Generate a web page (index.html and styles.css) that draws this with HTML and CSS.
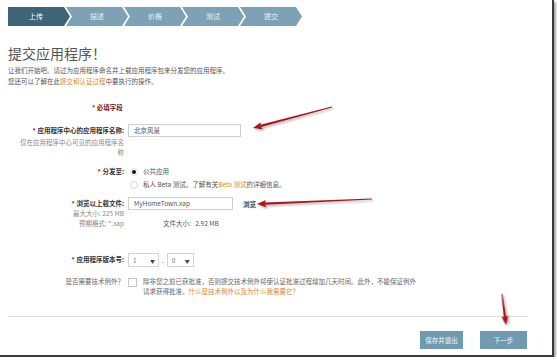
FILE: index.html
```html
<!DOCTYPE html>
<html lang="zh-CN">
<head>
    <meta charset="UTF-8">
    <meta name="viewport" content="width=device-width, initial-scale=1.0">
    <title>提交应用程序</title>
    <link rel="stylesheet" href="styles.css">
</head>
<body>
<div class="frame">

    <!-- wizard steps -->
    <ol class="steps">
        <li class="step current">上传</li>
        <li class="step">描述</li>
        <li class="step">价格</li>
        <li class="step">测试</li>
        <li class="step">提交</li>
    </ol>

    <h1>提交应用程序！</h1>
    <p class="intro">
        让我们开始吧。请过为应用程序命名并上载应用程序包来分发您的应用程序。<br>
        您还可以了解在此<a href="#">提交和认证过程</a>中要执行的操作。
    </p>

    <p class="required"><span class="star">*</span> 必填字段</p>

    <div class="form">
        <div class="row row-name">
            <div class="label">
                <div class="label-main"><span class="star">*</span> 应用程序中心的应用程序名称:</div>
                <div class="hint narrow">仅在应用程序中心可见的应用程序名称</div>
            </div>
            <div class="field">
                <div class="input wide">北京风景</div>
            </div>
        </div>

        <div class="row row-dist">
            <div class="label">
                <div class="label-main"><span class="star">*</span> 分发至:</div>
            </div>
            <div class="field">
                <div class="option"><span class="radio checked"></span>公共应用</div>
                <div class="option"><span class="radio"></span>私人 Beta 测试。了解有关 <a href="#">Beta 测试</a>的详细信息。</div>
            </div>
        </div>

        <div class="row row-file">
            <div class="label">
                <div class="label-main"><span class="star">*</span> 浏览以上载文件:</div>
                <div class="hint tight">最大大小: 225 MB</div>
                <div class="hint">预期格式: *.xap</div>
            </div>
            <div class="field">
                <div class="file-line">
                    <div class="input file">MyHomeTown.xap</div>
                    <a class="browse" href="#">浏览</a>
                </div>
                <div class="filesize">文件大小:&nbsp;&nbsp; 2.92 MB</div>
            </div>
        </div>

        <div class="row row-version">
            <div class="label">
                <div class="label-main"><span class="star">*</span> 应用程序版本号:</div>
            </div>
            <div class="field version">
                <div class="select"><span>1</span><span class="caret">▼</span></div>
                <span class="dot">.</span>
                <div class="select"><span>0</span><span class="caret">▼</span></div>
            </div>
        </div>

        <div class="row row-exception">
            <div class="label">
                <div class="label-plain">是否需要技术例外？</div>
            </div>
            <div class="field exception">
                <span class="checkbox"></span>
                <p>除非您之前已获批准，否则提交技术例外将使认证批准过程增加几天时间。此外，不能保证例外<br>
                请求获得批准。<a href="#">什么是技术例外以及为什么我需要它？</a></p>
            </div>
        </div>
    </div>

    <hr>

    <div class="actions">
        <button class="btn save">保存并退出</button>
        <button class="btn next">下一步</button>
    </div>

    <!-- red annotation arrows drawn over the screenshot -->
    <svg class="arrows" width="552" height="355" viewBox="0 0 552 355">
        <defs>
            <filter id="shadow" x="-20%" y="-50%" width="140%" height="200%">
                <feDropShadow dx="1.5" dy="1.5" stdDeviation="1" flood-color="#000" flood-opacity="0.35"/>
            </filter>
        </defs>
        <g fill="#a8161b" filter="url(#shadow)">
            <polygon transform="translate(253 128) rotate(-14.9)" points="0,0 9,-3.6 8,-1.2 81.7,-0.5 81.7,0.5 8,1.2 9,3.6"/>
            <polygon transform="translate(257 204) rotate(-2.5)" points="0,0 9,-3.6 8,-1.2 115,-0.5 115,0.5 8,1.2 9,3.6"/>
            <polygon transform="translate(506 325) rotate(-97.4)" points="0,0 9,-3.6 8,-1.2 31.3,-0.5 31.3,0.5 8,1.2 9,3.6"/>
        </g>
    </svg>
</div>
</body>
</html>
```

FILE: styles.css
```css
body {
    margin: 0;
    background-color: #fff;
    font-family: "Noto Sans CJK SC", "Noto Sans", sans-serif;
    font-size: 6.5px;
    color: #444;
}

.frame {
    position: relative;
    width: 544px;
    height: 348px;
    padding: 7px 0 0 8px;
    background-color: #fff;
    border-right: 2px solid #3a3a3a;
    border-bottom: 2px solid #3a3a3a;
    box-shadow: 2px 2px 2px rgba(0, 0, 0, 0.35);
}

a {
    color: #e0872a; /* orange links */
    text-decoration: none;
}

/* wizard steps */
.steps {
    display: flex;
    margin: 0;
    padding: 0;
    list-style: none;
    height: 19px;
}

.step {
    width: 62px;
    margin-right: -4px;
    padding-left: 6px;
    box-sizing: border-box;
    padding-right: 6px;
    background-color: #7ea2b5;
    color: #e9f0f4;
    line-height: 19px;
    font-size: 7px;
    text-align: center;
    clip-path: polygon(0 0, calc(100% - 6px) 0, 100% 50%, calc(100% - 6px) 100%, 0 100%, 6px 50%);
}

.step.current {
    padding-left: 0;
    background-color: #3e6478;
    color: #fff;
    clip-path: polygon(0 0, calc(100% - 6px) 0, 100% 50%, calc(100% - 6px) 100%, 0 100%);
}

h1 {
    margin: 18px 0 0;
    font-size: 14px;
    line-height: 18px;
    font-weight: normal;
    color: #555;
}

.intro {
    margin: 3px 0 0;
    line-height: 11px;
    color: #555;
}

.star {
    color: #c8141c;
}

.required {
    margin: 15px 0 0 84px;
    line-height: 10px;
    font-weight: bold;
    color: #7a1c22;
}

/* form grid */
.row {
    display: grid;
    grid-template-columns: 116px 1fr;
    column-gap: 4px;
}

.label {
    text-align: right;
}

.label-main {
    line-height: 13px;
    font-weight: bold;
    color: #333;
}

.label-plain {
    line-height: 10px;
    color: #666;
}

.hint {
    line-height: 10px;
    color: #8a8a8a;
}

.hint.narrow {
    margin-left: 10px;
}

.hint.tight {
    margin-top: -2px;
}

.row-name { margin-top: 12px; }
.row-dist { margin-top: 8px; }
.row-file { margin-top: 6px; }
.row-version { margin-top: 25px; }
.row-exception { margin-top: 9px; }

.input {
    height: 11px;
    line-height: 11px;
    padding-left: 5px;
    border: 1px solid #cfcfcf;
    color: #555;
}

.input.wide { width: 106px; }
.input.file { width: 98px; }

.option {
    display: flex;
    align-items: center;
    line-height: 13px;
    color: #555;
}

.radio {
    position: relative;
    width: 6px;
    height: 6px;
    margin: 0 5px 0 2px;
    border: 1px solid #d8d8d8;
    border-radius: 50%;
}

.radio.checked {
    border-color: #e6e6e6;
}

.radio.checked::after {
    content: "";
    position: absolute;
    top: 1px;
    left: 1px;
    width: 4px;
    height: 4px;
    border-radius: 50%;
    background-color: #111;
}

.file-line {
    display: flex;
    align-items: center;
    gap: 10px;
}

.browse {
    color: #2c4a66;
    font-weight: bold;
}

.filesize {
    margin: 8px 0 0 35px;
    line-height: 10px;
    color: #555;
}

.version {
    display: flex;
    align-items: center;
    gap: 3px;
}

.select {
    display: flex;
    justify-content: space-between;
    align-items: center;
    width: 22px;
    height: 12px;
    padding: 0 3px 0 4px;
    border: 1px solid #d4d4d4;
    color: #777;
}

.select + .dot + .select {
    width: 18px;
}

.caret {
    font-size: 5px;
    color: #444;
}

.dot {
    color: #666;
}

.exception {
    display: flex;
    align-items: flex-start;
    gap: 6px;
}

.checkbox {
    flex: none;
    width: 7px;
    height: 7px;
    margin-top: 2px;
    border: 1px solid #c4c4c4;
}

.exception p {
    margin: 0;
    line-height: 10px;
    color: #666;
}

hr {
    margin: 20px 24px 0 0;
    border: none;
    border-top: 1px solid #dedede;
}

.actions {
    display: flex;
    justify-content: flex-end;
    gap: 17px;
    margin: 14px 25px 0 0;
}

.btn {
    height: 18px;
    padding: 0;
    border: none;
    background-color: #6f9ab0;
    color: #f2f6f8;
    font-family: inherit;
    font-size: 6.5px;
}

.btn.save { width: 43px; }
.btn.next { width: 47px; }

.arrows {
    position: absolute;
    top: 0;
    left: 0;
    pointer-events: none;
}
```
